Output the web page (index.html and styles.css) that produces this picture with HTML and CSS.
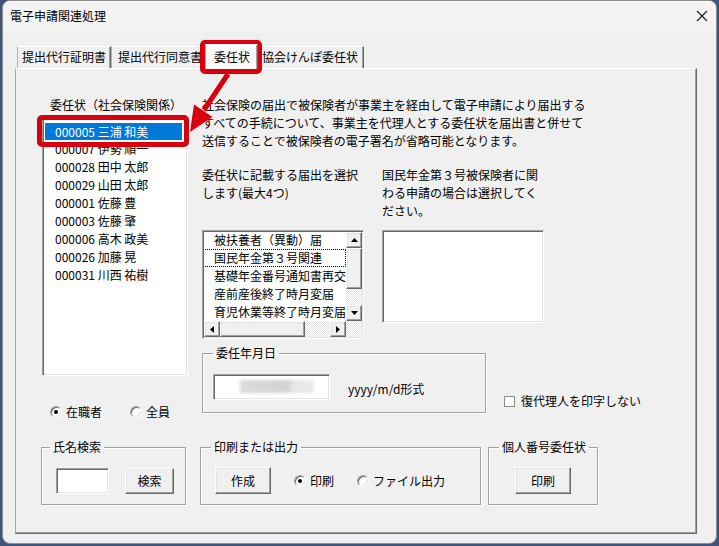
FILE: index.html
```html
<!DOCTYPE html>
<html lang="ja">
<head>
<meta charset="utf-8">
<title>電子申請関連処理</title>
<link rel="stylesheet" href="styles.css">
</head>
<body>
<div class="window">
  <div class="titlebar">
    <span class="title">電子申請関連処理</span>
    <svg class="close" width="12" height="12" viewBox="0 0 12 12"><path d="M1 1L11 11M11 1L1 11" stroke="#1a1a1a" stroke-width="1.1" fill="none"/></svg>
  </div>
  <div class="tabs">
    <div class="tab t1">提出代行証明書</div>
    <div class="tab t2">提出代行同意書</div>
    <div class="tab t3 selected">委任状</div>
    <div class="tab t4">協会けんぽ委任状</div>
  </div>
  <div class="panel">
    <div class="top">
      <div class="leftcol">
        <div class="lbl">委任状（社会保険関係）</div>
        <div class="sunken members">
          <div class="item sel">000005 三浦 和美</div>
          <div class="item">000007 伊勢 順一</div>
          <div class="item">000028 田中 太郎</div>
          <div class="item">000029 山田 太郎</div>
          <div class="item">000001 佐藤 豊</div>
          <div class="item">000003 佐藤 肇</div>
          <div class="item">000006 高木 政美</div>
          <div class="item">000026 加藤 晃</div>
          <div class="item">000031 川西 祐樹</div>
        </div>
        <div class="radios">
          <label class="opt"><span class="radio checked"></span>在職者</label>
          <label class="opt"><span class="radio"></span>全員</label>
        </div>
      </div>
      <div class="rightcol">
        <p class="desc">社会保険の届出で被保険者が事業主を経由して電子申請により届出する<br>すべての手続について、事業主を代理人とする委任状を届出書と併せて<br>送信することで被保険者の電子署名が省略可能となります。</p>
        <div class="pickers">
          <div class="picker">
            <div class="plabel">委任状に記載する届出を選択<br>します(最大4つ)</div>
            <div class="sunken scrolled">
              <div class="items">
                <div class="item">被扶養者（異動）届</div>
                <div class="item focus">国民年金第３号関連</div>
                <div class="item">基礎年金番号通知書再交</div>
                <div class="item">産前産後終了時月変届</div>
                <div class="item">育児休業等終了時月変届</div>
              </div>
              <div class="vscroll">
                <div class="raised sbtn"><svg width="7" height="4" viewBox="0 0 7 4"><path d="M3.5 0L7 4H0Z" fill="#000"/></svg></div>
                <div class="raised vthumb"></div>
                <div class="track"></div>
                <div class="raised sbtn"><svg width="7" height="4" viewBox="0 0 7 4"><path d="M0 0H7L3.5 4Z" fill="#000"/></svg></div>
              </div>
              <div class="hscroll">
                <div class="raised sbtn"><svg width="4" height="7" viewBox="0 0 4 7"><path d="M4 0V7L0 3.5Z" fill="#000"/></svg></div>
                <div class="raised hthumb"></div>
                <div class="track"></div>
                <div class="raised sbtn"><svg width="4" height="7" viewBox="0 0 4 7"><path d="M0 0L4 3.5L0 7Z" fill="#000"/></svg></div>
              </div>
              <div class="track"></div>
            </div>
          </div>
          <div class="picker">
            <div class="plabel">国民年金第３号被保険者に関<br>わる申請の場合は選択してく<br>ださい。</div>
            <div class="sunken emptylist"></div>
          </div>
        </div>
        <div class="daterow">
          <fieldset class="group dategroup">
            <legend>委任年月日</legend>
            <div class="gbody">
              <div class="sunken datebox"><span class="blur"></span></div>
              <span class="fmt">yyyy/m/d形式</span>
            </div>
          </fieldset>
          <label class="check"><span class="cbox"></span>復代理人を印字しない</label>
        </div>
      </div>
    </div>
    <div class="bottom">
      <fieldset class="group g1">
        <legend>氏名検索</legend>
        <div class="gbody">
          <div class="sunken namebox"></div>
          <div class="raised btn b-search">検索</div>
        </div>
      </fieldset>
      <fieldset class="group g2">
        <legend>印刷または出力</legend>
        <div class="gbody">
          <div class="raised btn b-make">作成</div>
          <label class="opt o-print"><span class="radio checked"></span>印刷</label>
          <label class="opt o-file"><span class="radio"></span>ファイル出力</label>
        </div>
      </fieldset>
      <fieldset class="group g3">
        <legend>個人番号委任状</legend>
        <div class="gbody">
          <div class="raised btn b-print">印刷</div>
        </div>
      </fieldset>
    </div>
  </div>
</div>
<div class="callout tabcall"></div>
<div class="callout itemcall"></div>
<svg class="arrow" width="719" height="546" viewBox="0 0 719 546">
  <line x1="228" y1="74" x2="204" y2="110" stroke="#d8000f" stroke-width="5"/>
  <path d="M190 132L194 104.5L212.5 117Z" fill="#d8000f"/>
</svg>
</body>
</html>
```

FILE: styles.css
```css
* { box-sizing: border-box; }
html, body { margin: 0; }
body {
  width: 719px;
  height: 546px;
  overflow: hidden;
  position: relative;
  background: #3f5579;
  font-family: "Noto Sans CJK JP", "Noto Sans", sans-serif;
  font-size: 12px;
  color: #000;
}
.window {
  margin-left: 2px;
  width: 715px;
  height: 544px;
  border: 1px solid #8e8e8e;
  border-radius: 8px;
  background: #f0f0f0;
  overflow: hidden;
}
.titlebar {
  height: 29px;
  background: #f3f3f3;
  display: flex;
  align-items: center;
  justify-content: space-between;
  padding: 0 8px 0 7px;
}
.title { line-height: 16px; }
.close { display: block; }

/* tabs */
.tabs {
  display: flex;
  align-items: flex-end;
  height: 38px;
  padding-left: 14px;
}
.tab {
  height: 22px;
  line-height: 20px;
  white-space: nowrap;
  border-top: 1px solid #fff;
  border-left: 1px solid #b4b4b4;
  border-right: 1px solid #696969;
  box-shadow: inset -1px 0 0 #a0a0a0;
}
.t1 { width: 94px; padding-left: 4px; }
.t2 { width: 94px; padding-left: 6px; }
.t3 {
  width: 53px;
  height: 25px;
  padding-left: 8px;
  padding-top: 2px;
  margin-bottom: -1px;
  background: #f9f9f9;
  position: relative;
  z-index: 1;
}
.t4 { width: 106px; padding-left: 3px; }

/* panel */
.panel {
  margin-left: 12px;
  width: 682px;
  height: 466px;
  border: 1px solid;
  border-color: #fff #696969 #696969 #a8a8a8;
  box-shadow: inset -1px -1px 0 #a0a0a0;
  padding: 27px 0 0 26px;
}
.top { display: flex; }
.leftcol { width: 146px; display: flex; flex-direction: column; }
.lbl { height: 18px; line-height: 18px; padding-left: 8px; margin-bottom: 4px; white-space: nowrap; }

.sunken {
  background: #fff;
  border: 1px solid;
  border-color: #a0a0a0 #fff #fff #a0a0a0;
  box-shadow: inset 1px 1px 0 #696969, inset -1px -1px 0 #e3e3e3;
}
.raised {
  background: #f0f0f0;
  border: 1px solid;
  border-color: #fff #696969 #696969 #fff;
  box-shadow: inset -1px -1px 0 #a0a0a0, inset 1px 1px 0 #e3e3e3;
}

.members {
  height: 258px;
  padding: 4px 5px 0 2px;
}
.item {
  height: 18px;
  line-height: 18px;
  padding-left: 10px;
  white-space: nowrap;
}
.members .sel {
  background: #0078d7;
  color: #fff;
  height: 17px;
  line-height: 17px;
}

.radios {
  margin-top: 27px;
  height: 18px;
  display: flex;
  align-items: center;
  padding-left: 8px;
  gap: 28px;
}
.opt { display: flex; align-items: center; gap: 4px; line-height: 18px; white-space: nowrap; }
.radio {
  width: 12px;
  height: 12px;
  border-radius: 50%;
  background: #fff;
  border: 1px solid;
  border-color: #a0a0a0 #fff #fff #a0a0a0;
  box-shadow: inset 1px 1px 0 #696969, inset -1px -1px 0 #e3e3e3;
  display: flex;
  align-items: center;
  justify-content: center;
}
.radio.checked::after {
  content: "";
  width: 4px;
  height: 4px;
  border-radius: 50%;
  background: #000;
}

.rightcol { margin-left: 14px; }
.desc { margin: 0; line-height: 18px; white-space: nowrap; }
.pickers { display: flex; gap: 18px; margin-top: 16px; }
.picker { width: 162px; }
.plabel { height: 64px; line-height: 18px; white-space: nowrap; }

.scrolled {
  height: 109px;
  padding: 1px;
  display: grid;
  grid-template-columns: 1fr 16px;
  grid-template-rows: 1fr 16px;
}
.items { overflow: hidden; }
.items .item { padding-left: 10px; margin-top: 0; }
.items .item:first-child { margin-top: -1px; }
.items .focus { outline: 1px dotted #000; outline-offset: -1px; margin-left: -1px; padding-left: 11px; }
.vscroll { display: flex; flex-direction: column; }
.hscroll { display: flex; }
.sbtn {
  width: 16px;
  height: 16px;
  flex: none;
  display: flex;
  align-items: center;
  justify-content: center;
}
.sbtn svg { display: block; }
.vthumb { height: 41px; flex: none; }
.hthumb { width: 85px; flex: none; }
.track {
  flex: 1;
  background: repeating-conic-gradient(#ffffff 0 25%, #e4e4e4 0 50%) 0 0 / 2px 2px;
}
.emptylist { height: 93px; }

/* group boxes */
.group {
  margin: 0;
  border: 1px solid #a0a0a0;
  box-shadow: inset 1px 1px 0 #fff, 1px 1px 0 #fff;
  min-inline-size: 0;
}
.group legend {
  padding: 0 3px;
  line-height: 18px;
  white-space: nowrap;
}
.gbody { display: flex; align-items: center; }

.daterow { display: flex; margin-top: 5px; }
.dategroup {
  width: 284px;
  padding: 12px 10px 12px 10px;
}
.datebox {
  width: 117px;
  height: 26px;
  padding: 5px 0 0 26px;
}
.blur {
  display: block;
  width: 74px;
  height: 13px;
  background: linear-gradient(to right, #dcdcdc 0%, #d2d2d2 65%, #e6e6e6 72%, #ebebeb 100%);
  filter: blur(1.5px);
}
.fmt { margin-left: 18px; padding-top: 4px; line-height: 18px; }
.check {
  align-self: flex-end;
  margin: 0 0 3px 18px;
  display: flex;
  align-items: center;
  gap: 6px;
  line-height: 18px;
  white-space: nowrap;
}
.cbox {
  width: 11px;
  height: 11px;
  background: #fff;
  border: 1px solid #8a8a8a;
}

.bottom {
  display: flex;
  margin-top: 17px;
  margin-left: -1px;
}
.bottom .group { padding: 11px 11px 10px 14px; }
.bottom .gbody { height: 27px; }
.g1 { width: 145px; }
.g1 legend { margin-left: -6px; }
.g2 { width: 281px; margin-left: 14px; }
.g2 legend { margin-left: -4px; }
.g3 { width: 110px; margin-left: 7px; }
.g3 legend { margin-left: -4px; }
.g3 .gbody { justify-content: center; padding-right: 3px; }

.namebox { width: 53px; height: 26px; }
.btn {
  height: 27px;
  line-height: 25px;
  text-align: center;
}
.b-search { width: 49px; height: 26px; line-height: 24px; margin-left: 16px; }
.b-make { width: 56px; }
.b-print { width: 56px; }
.o-print { margin-left: 23px; }
.o-file { margin-left: 23px; }

/* annotations */
.callout {
  position: absolute;
  border: 5px solid #d8000f;
  border-radius: 5px;
}
.tabcall { left: 200px; top: 40px; width: 62px; height: 34px; }
.itemcall { left: 37px; top: 115px; width: 152px; height: 32px; }
.arrow { position: absolute; left: 0; top: 0; pointer-events: none; }
```
